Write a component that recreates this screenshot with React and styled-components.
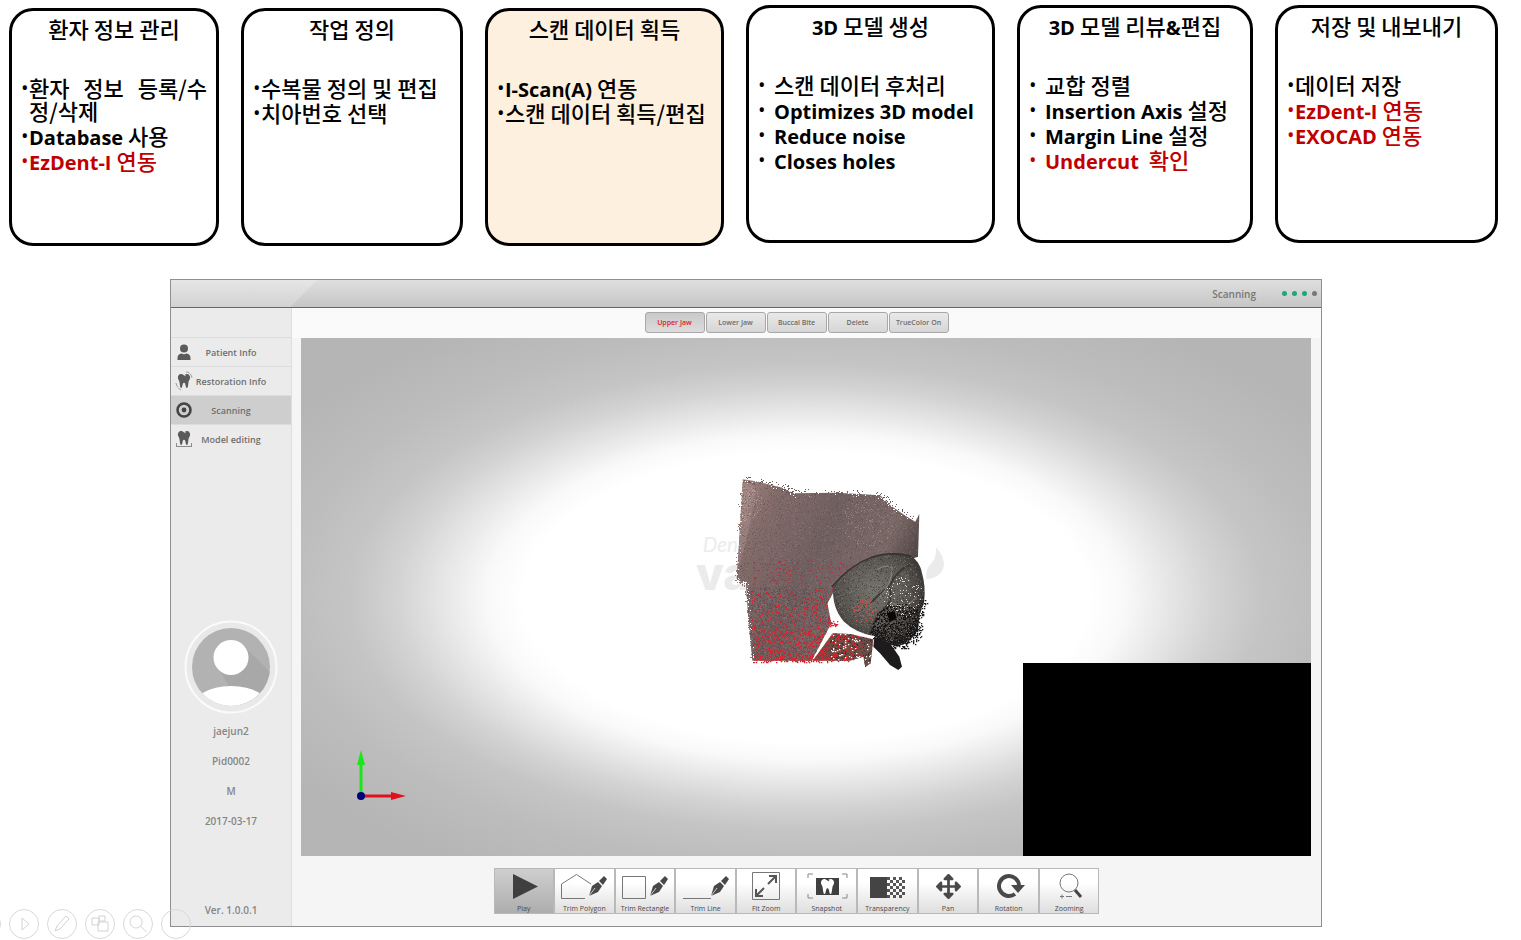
import styled, { createGlobalStyle, css } from 'styled-components';
import React, { useState } from 'react';
import { FaArrowsAlt, FaTooth } from 'react-icons/fa';

const GlobalStyle = createGlobalStyle`
	* {
		box-sizing: border-box;
	}
	body {
		margin: 0;
		background: #fff;
		font-family: 'Open Sans', 'Noto Sans CJK KR', sans-serif;
	}
	button {
		font-family: inherit;
		padding: 0;
		cursor: pointer;
	}
	ul {
		list-style: none;
		margin: 0;
		padding: 0;
	}
`;

const Steps = styled.section`
	display: grid;
	grid-template-columns: 210fr 222fr 239fr 249fr 236fr 223fr;
	column-gap: 22px;
	align-items: start;
	padding: 5px 23px 0 9px;
`;
const Card = styled.article`
	min-height: 238px;
	margin-top: ${({ $raised }) => ($raised ? 0 : 3)}px;
	padding: 5px 9px;
	border: 3px solid #000;
	border-radius: 24px;
	background: ${({ $current }) => ($current ? '#fdf0df' : '#fff')};
	font-family: 'Noto Sans CJK KR', sans-serif;
	font-size: 22px;
	font-weight: 500;
	color: #000;
`;
const CardTitle = styled.h2`
	margin: 0 0 36px;
	font-size: 22px;
	font-weight: 500;
	line-height: 24px;
	text-align: center;
	white-space: nowrap;
`;
const Points = styled.ul`
	display: grid;
	row-gap: 2px;
`;
const Point = styled.li`
	display: grid;
	grid-template-columns: ${({ $wide }) => ($wide ? 16 : 8)}px minmax(0, 1fr);
	line-height: 23px;
	text-align: justify;
	color: ${({ $red }) => ($red ? '#c00000' : '#000')};
	&::before {
		content: '•';
		font-family: 'Open Sans', sans-serif;
		font-size: 20px;
	}
`;
const Latin = styled.span`
	font-family: 'Open Sans', sans-serif;
	font-size: 20px;
	font-weight: 700;
	line-height: 16px;
`;

const Window = styled.main`
	margin: 33px 199px 13px 170px;
	border: 1px solid #8f8f8f;
	background: #f5f5f5;
	color: #777;
`;
const TitleBar = styled.header`
	display: flex;
	align-items: center;
	justify-content: flex-end;
	gap: 26px;
	height: 28px;
	padding-right: 4px;
	border-bottom: 1px solid #666;
	background:
		linear-gradient(135deg, rgba(255, 255, 255, 0.22) 103px, transparent 104px) no-repeat,
		linear-gradient(#dfdfdf, #c6c6c6);
	font-size: 10px;
	font-weight: 600;
`;
const Dots = styled.div`
	display: flex;
	gap: 5px;
`;
const Dot = styled.i`
	width: 5px;
	height: 5px;
	border-radius: 50%;
	background: ${({ $done }) => ($done ? '#1fa67a' : '#777')};
`;
const Body = styled.div`
	display: grid;
	grid-template-columns: 121px minmax(0, 1fr);
`;
const Sidebar = styled.aside`
	display: flex;
	flex-direction: column;
	padding-top: 29px;
	border-right: 1px solid #dedede;
	background: #ebebeb;
`;
const NavItem = styled.button`
	display: grid;
	grid-template-columns: 24px minmax(0, 1fr) 24px;
	align-items: center;
	width: 100%;
	height: 29px;
	border: 0;
	border-top: 1px solid #dcdcdc;
	background: ${({ $active }) => ($active ? '#cecece' : 'transparent')};
	color: #6e6e6e;
	font-size: 9px;
	font-weight: 600;
	white-space: nowrap;
	> svg {
		margin-left: 4px;
		color: #5a5a5a;
	}
`;
const Profile = styled.div`
	display: flex;
	flex-direction: column;
	align-items: center;
	margin-top: auto;
	font-size: 10px;
	font-weight: 600;
	line-height: 30px;
	color: #858585;
	svg {
		margin-bottom: 2px;
	}
`;
const Version = styled.p`
	margin: 59px 0 1px;
	font-size: 10px;
	font-weight: 600;
	line-height: 30px;
	text-align: center;
	color: #858585;
`;
const Work = styled.div`
	display: flex;
	flex-direction: column;
`;
const Tabs = styled.div`
	display: flex;
	justify-content: center;
	gap: 1px;
	height: 30px;
	padding: 4px 20px 0 0;
	background: #fafafa;
`;
const Tab = styled.button`
	width: 60px;
	height: 21px;
	border: 1px solid #a8a8a8;
	border-radius: 3px;
	background: linear-gradient(#e9e9e9, #d6d6d6);
	font-size: 7px;
	font-weight: 600;
	color: #6c6c6c;
	white-space: nowrap;
	${({ $active }) =>
		$active &&
		css`
			background: linear-gradient(#c9c9c9, #dcdcdc);
			color: #e0202c;
		`}
`;
const Viewer = styled.div`
	position: relative;
	aspect-ratio: 1010 / 518;
	margin: 0 10px 0 9px;
	overflow: hidden;
	background: radial-gradient(
		farthest-side,
		#fff 56%,
		#f9f9f9 63%,
		#e6e6e6 72%,
		#d3d3d3 81%,
		#c5c5c5 90%,
		#bcbcbc 104%,
		#b5b5b5 124%
	);
`;
const Model = styled.svg`
	position: absolute;
	top: 25.5%;
	left: 38.5%;
	width: 270px;
	height: 210px;
`;
const Axes = styled.svg`
	position: absolute;
	left: 54px;
	bottom: 54px;
`;
const Camera = styled.div`
	position: absolute;
	right: 0;
	bottom: 0;
	width: 288px;
	height: 193px;
	background: #000;
`;
const Tools = styled.div`
	display: grid;
	grid-template-columns: repeat(10, minmax(0, 1fr));
	width: 100%;
	max-width: 626px;
	margin: 0 auto;
	padding: 12px 20px 12px 0;
`;
const Tool = styled.button`
	display: flex;
	flex-direction: column;
	align-items: center;
	height: 46px;
	border: 1px solid #b9b9b9;
	background: ${({ $active }) =>
		$active ? 'linear-gradient(#cfcfcf, #adadad)' : 'linear-gradient(#fff 30%, #dedede)'};
	color: #4a4a4a;
	font-size: 7px;
	line-height: 10px;
	white-space: nowrap;
	svg {
		flex: none;
	}
`;
const ShowControls = styled.div`
	position: fixed;
	left: -29px;
	bottom: 1px;
	display: flex;
	gap: 8px;
`;
const ShowButton = styled.button`
	display: grid;
	place-items: center;
	width: 30px;
	height: 30px;
	border: 1px solid #d8d8d8;
	border-radius: 50%;
	background: transparent;
	color: #d2d2d2;
`;

const steps = [
	{
		title: '환자 정보 관리',
		points: [['환자 정보 등록/수정/삭제'], ['Database 사용'], ['EzDent-I 연동', true]],
	},
	{ title: '작업 정의', points: [['수복물 정의 및 편집'], ['치아번호 선택']] },
	{
		title: '스캔 데이터 획득',
		current: true,
		points: [['I-Scan(A) 연동'], ['스캔 데이터 획득/편집']],
	},
	{
		title: '3D 모델 생성',
		raised: true,
		wide: true,
		points: [['스캔 데이터 후처리'], ['Optimizes 3D model'], ['Reduce noise'], ['Closes holes']],
	},
	{
		title: '3D 모델 리뷰&편집',
		raised: true,
		wide: true,
		points: [
			['교합 정렬'],
			['Insertion Axis 설정'],
			['Margin Line 설정'],
			['Undercut \u00a0확인', true],
		],
	},
	{
		title: '저장 및 내보내기',
		raised: true,
		points: [['데이터 저장'], ['EzDent-I 연동', true], ['EXOCAD 연동', true]],
	},
];

// latin runs are set in their own face, a size below the hangul
const mixed = (text) =>
	text
		.split(/([!-~]+(?: [!-~]+)*)/)
		.map((part, i) => (i % 2 ? <Latin key={i}>{part}</Latin> : part));

const PersonIcon = () => (
	<svg width="18" height="18" viewBox="0 0 18 18" fill="currentColor">
		<circle cx="9" cy="5.500" r="4" />
		<path d="M2.500 17v-2q0-4 4-4.500 2.500 1.500 5 0 4 .5 4 4.500v2z" />
	</svg>
);
const RestoreIcon = () => (
	<svg width="18" height="20" viewBox="0 0 18 20" fill="none" stroke="#9a9a9a">
		<FaTooth x="2" y="3" size={14} color="#5a5a5a" stroke="none" />
		<path d="M11 1q5 0 6 6M1 12q1 5 5 7" strokeDasharray="4 1" />
	</svg>
);
const TargetIcon = () => (
	<svg width="18" height="18" viewBox="0 0 18 18" fill="none" stroke="#444">
		<circle cx="9" cy="9" r="6.500" strokeWidth="2.600" />
		<circle cx="9" cy="9" r="2.400" fill="#444" stroke="none" />
	</svg>
);
const EditIcon = () => (
	<svg width="18" height="18" viewBox="0 0 18 18" fill="none" stroke="#8a8a8a">
		<FaTooth x="2" y="1" size={14} color="#5a5a5a" stroke="none" />
		<path d="M1 16.500h16M1.500 13v3M16.500 13v3" />
	</svg>
);
const nav = [
	['Patient Info', PersonIcon],
	['Restoration Info', RestoreIcon],
	['Scanning', TargetIcon],
	['Model editing', EditIcon],
];

const Avatar = () => (
	<svg width="94" height="94" viewBox="0 0 94 94">
		<defs>
			<clipPath id="face">
				<circle cx="47" cy="47" r="39" />
			</clipPath>
		</defs>
		<circle cx="47" cy="47" r="45.500" fill="#e9e9e9" stroke="#fafafa" strokeWidth="2" />
		<g clipPath="url(#face)">
			<rect width="94" height="94" fill="#b2b2b2" />
			<path d="M59 25l34 34v35H60L36 50z" fill="#a8a8a8" />
			<circle cx="47" cy="37.500" r="17.500" fill="#fff" />
			<ellipse cx="47" cy="90" rx="40" ry="24" fill="#fff" />
		</g>
	</svg>
);

const Pen = () => (
	<g fill="#484848">
		<path d="M30 27l3-10 6-4 4 4-4 6z" />
		<path d="M40 12l5-5 3 3-4 6z" />
		<path d="M30 27l6-8" stroke="#eee" strokeWidth=".8" />
	</g>
);
const Checks = () => {
	const cells = [];
	for (let y = 0; y < 7; y++) {
		for (let x = y % 2; x < 6; x += 2) {
			cells.push(<rect key={`${x}-${y}`} x={29 + x * 3} y={8 + y * 3} width="3" height="3" />);
		}
	}
	return <g fill="#555">{cells}</g>;
};
const tools = [
	['Play', <path key="i" d="M18 5l25 12.500L18 30z" fill="#3f3f3f" />],
	[
		'Trim Polygon',
		<g key="i" transform="translate(4 0)">
			<path d="M26 29.500H2.500V15l15-9.500L32 15" fill="none" stroke="#777" />
			<Pen />
		</g>,
	],
	[
		'Trim Rectangle',
		<g key="i" transform="translate(4 0)">
			<path d="M2.500 7.500h23v22h-23z" fill="none" stroke="#777" />
			<Pen />
		</g>,
	],
	[
		'Trim Line',
		<g key="i" transform="translate(4 0)">
			<path d="M2 29.500h28" fill="none" stroke="#777" />
			<Pen />
		</g>,
	],
	[
		'Fit Zoom',
		<g key="i" fill="none" stroke="#555">
			<path d="M15.500 3.500h27v27h-27z" stroke="#777" />
			<path d="M19 27l8-8M31 15l8-8M32 7h7v7M19 20v7h7" strokeWidth="2" />
		</g>,
	],
	[
		'Snapshot',
		<g key="i">
			<path d="M10 9V5h5M44 5h5v4M10 25v4h5M44 29h5v-4" fill="none" stroke="#888" />
			<rect x="18" y="9" width="23" height="17" fill="#3f3f3f" />
			<FaTooth x="22" y="10" size={15} color="#fff" />
		</g>,
	],
	[
		'Transparency',
		<g key="i">
			<rect x="12" y="8" width="17" height="21" fill="#444" />
			<Checks />
		</g>,
	],
	['Pan', <FaArrowsAlt key="i" x="17" y="5" size={25} color="#484848" />],
	[
		'Rotation',
		<g key="i">
			<path d="M35 25a10 10 0 1 1 4-8" fill="none" stroke="#484848" strokeWidth="4" />
			<path d="M31 16h14l-7 8z" fill="#484848" />
		</g>,
	],
	[
		'Zooming',
		<g key="i" fill="none" stroke="#777">
			<circle cx="29" cy="14" r="9" />
			<path d="M35 21l6 7" stroke="#444" strokeWidth="3" />
			<path d="M20 27.500h4M22 25.500v4M26 27.500h6" />
		</g>,
	],
];

// small seeded generator, so the point cloud is the same on every render
const points = (seed, count, size, place) => {
	let s = seed * 7919;
	const rnd = () => {
		s = (s * 16807) % 2147483647;
		return s / 2147483647;
	};
	let d = '';
	for (let i = 0; i < count; i++) {
		const [x, y] = place(rnd(), rnd());
		d += `M${Math.round(x / 3) * 3} ${Math.round(y / 3) * 3}h${size}v${size}h-${size}z`;
	}
	return d;
};
const box = (x, y, w, h) => (a, b) => [x + a * w, y + b * h];
const disc = (x, y, r) => (a, b) => [
	x + Math.cos(a * 6.283) * r * Math.sqrt(b),
	y + Math.sin(a * 6.283) * r * Math.sqrt(b),
];
const along = (list, spread) => (a, b) => {
	const t = a * (list.length - 1);
	const i = Math.floor(t);
	const [x1, y1] = list[i];
	const [x2, y2] = list[i + 1];
	const dx = (b - 0.5) * spread;
	const dy = (((b * 7919) % 1) - 0.5) * spread;
	return [x1 + (x2 - x1) * (t - i) + dx, y1 + (y2 - y1) * (t - i) + dy];
};
const gum =
	'M158 28L200 34 280 54 310 70 440 68 570 76 600 105 650 140 676 155 688 132 684 260 560 300 440 350 412 400 424 460 365 572 187 572 175 450 168 345 140 328 148 200z';
const tooth =
	'M430 350Q480 290 545 264 600 240 660 256 690 275 696 310 708 350 702 400 686 430 684 480 660 520 622 530 580 520 553 498 500 490 462 455 424 410 430 350z';
const tail = 'M553 500L600 520 628 560 636 590 625 600 600 585 570 550 550 530z';
const flap = 'M368 572L428 490 480 492 550 508 542 580 526 592 520 560 480 572z';
const topEdge = [
	[158, 30],
	[210, 34],
	[280, 52],
	[310, 70],
	[440, 68],
	[570, 76],
	[600, 105],
	[676, 150],
];
const leftEdge = [
	[152, 60],
	[148, 200],
	[140, 328],
	[170, 345],
	[177, 450],
	[187, 570],
];
const toothEdge = [
	[700, 390],
	[684, 440],
	[684, 490],
	[650, 520],
	[600, 530],
	[550, 500],
];
const bottomEdge = [
	[187, 572],
	[280, 570],
	[360, 572],
	[500, 568],
];

const Scan = () => (
	<Model viewBox="0 0 810 630" role="img" aria-label="Upper jaw scan">
		<defs>
			<linearGradient id="skin" x2="1" y2=".5">
				<stop offset="0" stopColor="#a58884" />
				<stop offset=".2" stopColor="#826b69" />
				<stop offset=".5" stopColor="#705f60" />
				<stop offset=".8" stopColor="#7a6866" />
				<stop offset="1" stopColor="#443c3b" />
			</linearGradient>
			<radialGradient id="enamel" cx=".45" cy=".4" r=".65">
				<stop offset="0" stopColor="#76736d" />
				<stop offset=".6" stopColor="#57534f" />
				<stop offset="1" stopColor="#2b2928" />
			</radialGradient>
			<clipPath id="gumClip">
				<path d={gum} />
			</clipPath>
			<clipPath id="flapClip">
				<path d={flap} />
			</clipPath>
			<clipPath id="toothClip">
				<path d={tooth} />
			</clipPath>
		</defs>
		<text x="38" y="246" fontFamily="Lato" fontStyle="italic" fontSize="62" fill="#ececec">
			Den
		</text>
		<text x="18" y="360" fontFamily="Inter" fontWeight="800" fontSize="136" fill="#ebebeb">
			va
		</text>
		<path d="M738 232q30 30 22 62-10 30-50 34-6-24 10-44 20-16 18-52z" fill="#ebebeb" />
		<path d={gum} fill="url(#skin)" />
		<path d={points(31, 220, 3, along(topEdge, 24))} fill="#6b5b5b" />
		<path d={points(37, 90, 3, along(topEdge, 20))} fill="#fff" />
		<path d={points(41, 140, 3, along(leftEdge, 14))} fill="#907673" />
		<path d={points(43, 80, 3, along(leftEdge, 12))} fill="#fff" />
		<g clipPath="url(#gumClip)">
			<path d="M165 40l30 10-14 110-22 90-20 60z" fill="#b09390" opacity=".4" />
			<path d={points(3, 3200, 3, box(135, 25, 560, 550))} fill="#54494c" opacity=".45" />
			<path d={points(5, 2600, 3, box(135, 25, 560, 550))} fill="#9b8583" opacity=".4" />
			<path d={points(7, 1300, 3, box(170, 350, 260, 225))} fill="#4a4a48" opacity=".6" />
			<path d={points(11, 130, 4, box(185, 270, 345, 90))} fill="#b8303b" />
			<path d={points(13, 460, 4, box(183, 360, 245, 212))} fill="#cf2733" />
			<path d={points(15, 320, 4, (a, b) => [190 + a * 230, 572 - b * b * 100])} fill="#dd2029" />
			<path d={points(17, 150, 3, disc(535, 150, 80))} fill="#b39b97" opacity=".5" />
			<path d={points(18, 120, 3, disc(170, 100, 50))} fill="#c4aaa6" opacity=".6" />
		</g>
		<path d={tooth} fill="url(#enamel)" />
		<g clipPath="url(#toothClip)">
			<g fill="none">
				<path
					d="M540 500q10-60 50-90 20-30 8-60-30 20-56 50M598 350q20-50 70-70"
					stroke="#3b3836"
					strokeWidth="6"
				/>
				<path
					d="M560 300q30-20 46-6 0 50-40 90M610 400q40 20 70-20"
					stroke="#807d76"
					strokeWidth="4"
				/>
			</g>
			<path d={points(19, 700, 3, box(430, 250, 275, 280))} fill="#8a867e" opacity=".5" />
			<path d={points(21, 900, 3, box(430, 250, 275, 280))} fill="#2d2a2a" opacity=".5" />
			<path d={points(23, 1100, 4, disc(630, 490, 90))} fill="#151313" />
			<path d={points(24, 220, 3, disc(630, 490, 90))} fill="#6b6761" />
			<path d={points(27, 90, 3, disc(640, 380, 60))} fill="#d8d6d2" />
			<path d={points(29, 60, 4, disc(520, 420, 38))} fill="#cf5349" />
		</g>
		<path
			d="M426 350Q480 286 545 262 600 244 664 258"
			fill="none"
			stroke="#3a3332"
			strokeWidth="5"
		/>
		<path d="M590 430l24-6 6 20-20 12z" fill="#080808" />
		<path d={points(47, 200, 4, along(toothEdge, 26))} fill="#1c1a1a" />
		<path d={tail} fill="#1d1b1b" />
		<path d={flap} fill="#6d4b45" />
		<g clipPath="url(#flapClip)">
			<path d={points(51, 330, 4, box(368, 485, 150, 90))} fill="#cc2a30" />
			<path d={points(53, 260, 3, box(420, 485, 130, 110))} fill="#3c3330" />
			<path d={points(57, 90, 4, box(420, 485, 130, 110))} fill="#fff" />
		</g>
		<path d={points(59, 100, 4, along(bottomEdge, 10))} fill="#d82630" />
		<path d={points(61, 26, 4, box(415, 452, 26, 18))} fill="#e02639" />
	</Model>
);

const showIcons = [
	null,
	<path key="i" d="M8 4l7 6-7 6z" />,
	<path key="i" d="M3 17l2-5L14 2l3 3-9 10z" />,
	<path key="i" d="M2 4h7v7H2zM9 2h6v5H9zM8 8h10v9H8z" />,
	<path key="i" d="M8 2a6 6 0 1 0 .1 0zM12.500 12l6 6" />,
	null,
];
const showLabels = ['Previous', 'Next', 'Pen', 'All slides', 'Zoom', 'More'];

const tabs = ['Upper Jaw', 'Lower Jaw', 'Buccal Bite', 'Delete', 'TrueColor On'];

const App = () => {
	const [page, setPage] = useState('Scanning');
	const [tab, setTab] = useState('Upper Jaw');
	const [tool, setTool] = useState('Play');
	return (
		<>
			<GlobalStyle />
			<Steps>
				{steps.map(({ title, current, raised, wide, points: list }) => (
					<Card key={title} $current={current} $raised={raised}>
						<CardTitle>{mixed(title)}</CardTitle>
						<Points>
							{list.map(([text, red]) => (
								<Point key={text} $red={red} $wide={wide}>
									<span>{/[A-Z]/.test(text) ? mixed(text) : text}</span>
								</Point>
							))}
						</Points>
					</Card>
				))}
			</Steps>
			<Window>
				<TitleBar>
					<span>Scanning</span>
					<Dots>
						<Dot $done />
						<Dot $done />
						<Dot $done />
						<Dot />
					</Dots>
				</TitleBar>
				<Body>
					<Sidebar>
						<nav>
							{nav.map(([label, Icon]) => (
								<NavItem key={label} $active={page === label} onClick={() => setPage(label)}>
									<Icon />
									<span>{label}</span>
								</NavItem>
							))}
						</nav>
						<Profile>
							<Avatar />
							<span>jaejun2</span>
							<span>Pid0002</span>
							<span>M</span>
							<span>2017-03-17</span>
						</Profile>
						<Version>Ver. 1.0.0.1</Version>
					</Sidebar>
					<Work>
						<Tabs>
							{tabs.map((label) => (
								<Tab key={label} $active={tab === label} onClick={() => setTab(label)}>
									{label}
								</Tab>
							))}
						</Tabs>
						<Viewer>
							<Scan />
							<Axes width="54" height="54" viewBox="0 0 54 54">
								<path d="M6 48V14" stroke="#1be61b" strokeWidth="3" />
								<path d="M6 2l4 15H2z" fill="#1be61b" />
								<path d="M6 48h32" stroke="#e3101c" strokeWidth="3" />
								<path d="M51 48l-15 4v-8z" fill="#e3101c" />
								<circle cx="6" cy="48" r="4" fill="#00007a" />
							</Axes>
							<Camera />
						</Viewer>
						<Tools>
							{tools.map(([label, icon]) => (
								<Tool key={label} $active={tool === label} onClick={() => setTool(label)}>
									<svg width="58" height="35" viewBox="0 0 58 35">
										{icon}
									</svg>
									{label}
								</Tool>
							))}
						</Tools>
					</Work>
				</Body>
			</Window>
			<ShowControls>
				{showLabels.map((label, i) => (
					<ShowButton key={label} aria-label={label}>
						<svg width="20" height="20" viewBox="0 0 20 20" fill="none" stroke="currentColor">
							{showIcons[i]}
						</svg>
					</ShowButton>
				))}
			</ShowControls>
		</>
	);
};
export default App;
